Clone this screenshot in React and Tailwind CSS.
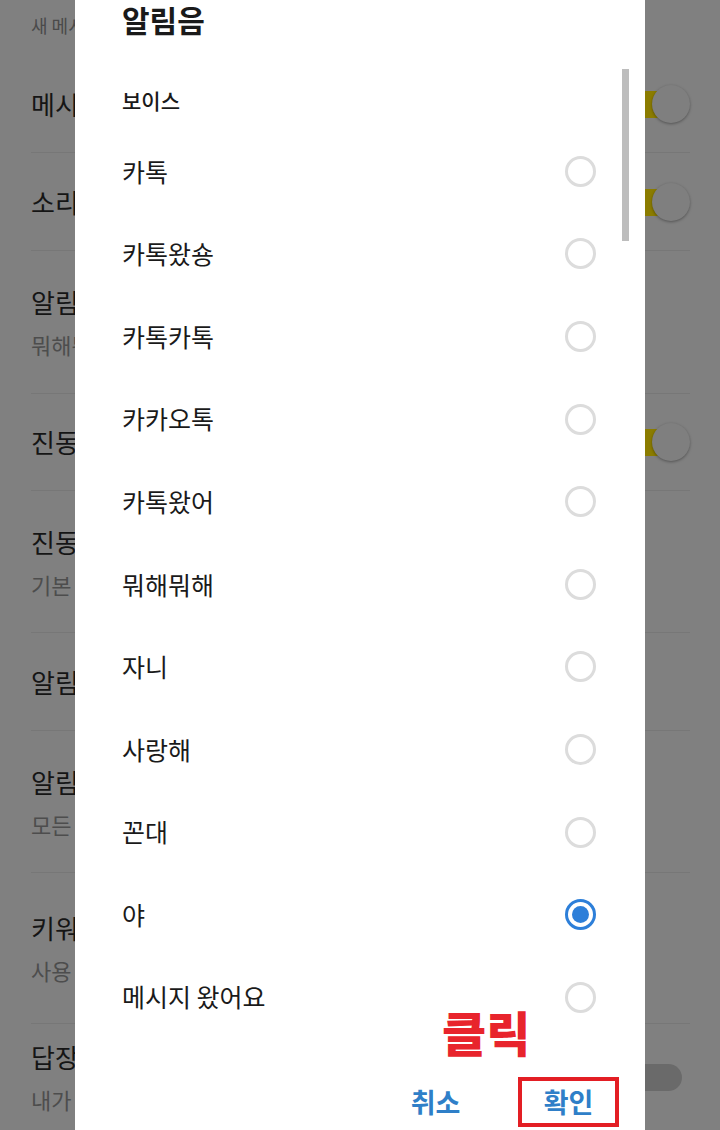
const FONT = { fontFamily: '"Noto Sans CJK KR", "Noto Sans", sans-serif' };

const settings = [
  { h: 'h-[97px]', title: '메시지 알림', toggle: 'on' },
  { h: 'h-[98px]', title: '소리', toggle: 'on' },
  { h: 'h-[143px]', title: '알림음', sub: '뭐해뭐해' },
  { h: 'h-[97px]', title: '진동', toggle: 'on' },
  { h: 'h-[142px]', title: '진동 알림음', sub: '기본 진동' },
  { h: 'h-[98px]', title: '알림 센터' },
  { h: 'h-[142px]', title: '알림 표시', sub: '모든 알림' },
  { h: 'h-[151px]', title: '키워드 알림', sub: '사용 안 함' },
  { h: 'h-[107px]', title: '답장 알림', sub: '내가 보낸 메시지', toggle: 'off' },
];

const sounds = ['카톡', '카톡왔숑', '카톡카톡', '카카오톡', '카톡왔어', '뭐해뭐해', '자니', '사랑해', '꼰대', '야', '메시지 왔어요'];

function Toggle({ on }) {
  return (
    <div className="relative w-[60px] h-[38px] shrink-0">
      <div
        className={`absolute top-[6px] h-[27px] rounded-full ${on ? 'left-0 right-[18px] bg-[#8b7c00]' : 'left-0 right-[8px] bg-[#6a6a6a]'}`}
      />
      {on && (
        <div className="absolute right-0 top-0 w-[38px] h-[38px] rounded-full bg-[#7f7f7f] shadow-[0_1px_3px_rgba(0,0,0,0.35)]" />
      )}
    </div>
  );
}

function Radio({ checked }) {
  return checked ? (
    <div className="w-[31px] h-[31px] rounded-full border-[3px] border-[#2d7fd9] flex items-center justify-center">
      <div className="w-[17px] h-[17px] rounded-full bg-[#2d7fd9]" />
    </div>
  ) : (
    <div className="w-[31px] h-[31px] rounded-full border-[3px] border-[#dcdcdc]" />
  );
}

export default function App() {
  return (
    <div className="relative w-[720px] h-[1130px] overflow-hidden bg-[#808080]" style={FONT}>
      {/* dimmed settings list behind */}
      <div className="flex flex-col">
        <div className="h-[55px] px-[31px] pt-[12px] text-[18px] leading-[26px] text-[#4a4a4a]">새 메시지 알림</div>
        {settings.map((s, i) => (
          <div key={i} className={`${s.h} mx-[31px] mr-[30px] flex items-center justify-between ${i > 0 ? 'border-t border-[#777777]' : ''}`}>
            <div className="flex flex-col gap-[14px]">
              <div className="text-[26px] leading-[30px] text-[#151515]">{s.title}</div>
              {s.sub && <div className="text-[22px] leading-[26px] text-[#4d4d4d]">{s.sub}</div>}
            </div>
            {s.toggle && <Toggle on={s.toggle === 'on'} />}
          </div>
        ))}
      </div>

      {/* dialog */}
      <div className="absolute top-0 bottom-0 left-[75px] w-[570px] bg-white flex flex-col">
        <div className="pl-[47px] pt-[4px] h-[40px] text-[30px] leading-[30px] font-bold text-[#1a1a1a]">알림음</div>
        <div className="pl-[47px] mt-[49px] h-[22px] text-[21px] leading-[22px] font-medium text-[#1a1a1a]">보이스</div>
        <div className="mt-[19px] flex flex-col">
          {sounds.map((s) => (
            <div key={s} className="h-[82.6px] pl-[47px] pr-[49px] flex items-center justify-between">
              <span className="text-[25px] text-[#1a1a1a]">{s}</span>
              <Radio checked={s === '야'} />
            </div>
          ))}
        </div>
        <div className="mt-auto pb-[3px] pr-[26px] flex justify-end items-center gap-[32px]">
          <button className="w-[101px] h-[50px] text-[27px] font-bold text-[#2f7fc8]">취소</button>
          <button className="w-[101px] h-[50px] border-4 border-[#e31e24] text-[27px] font-bold text-[#2f7fc8]">확인</button>
        </div>

        {/* scrollbar */}
        <div className="absolute left-[547px] top-[69px] w-[7px] h-[172px] bg-[#bdbdbd]" />

        {/* annotation */}
        <div className="absolute left-[367px] top-[1001px] text-[48px] leading-[60px] font-black text-[#e8242c]">클릭</div>
      </div>
    </div>
  );
}
